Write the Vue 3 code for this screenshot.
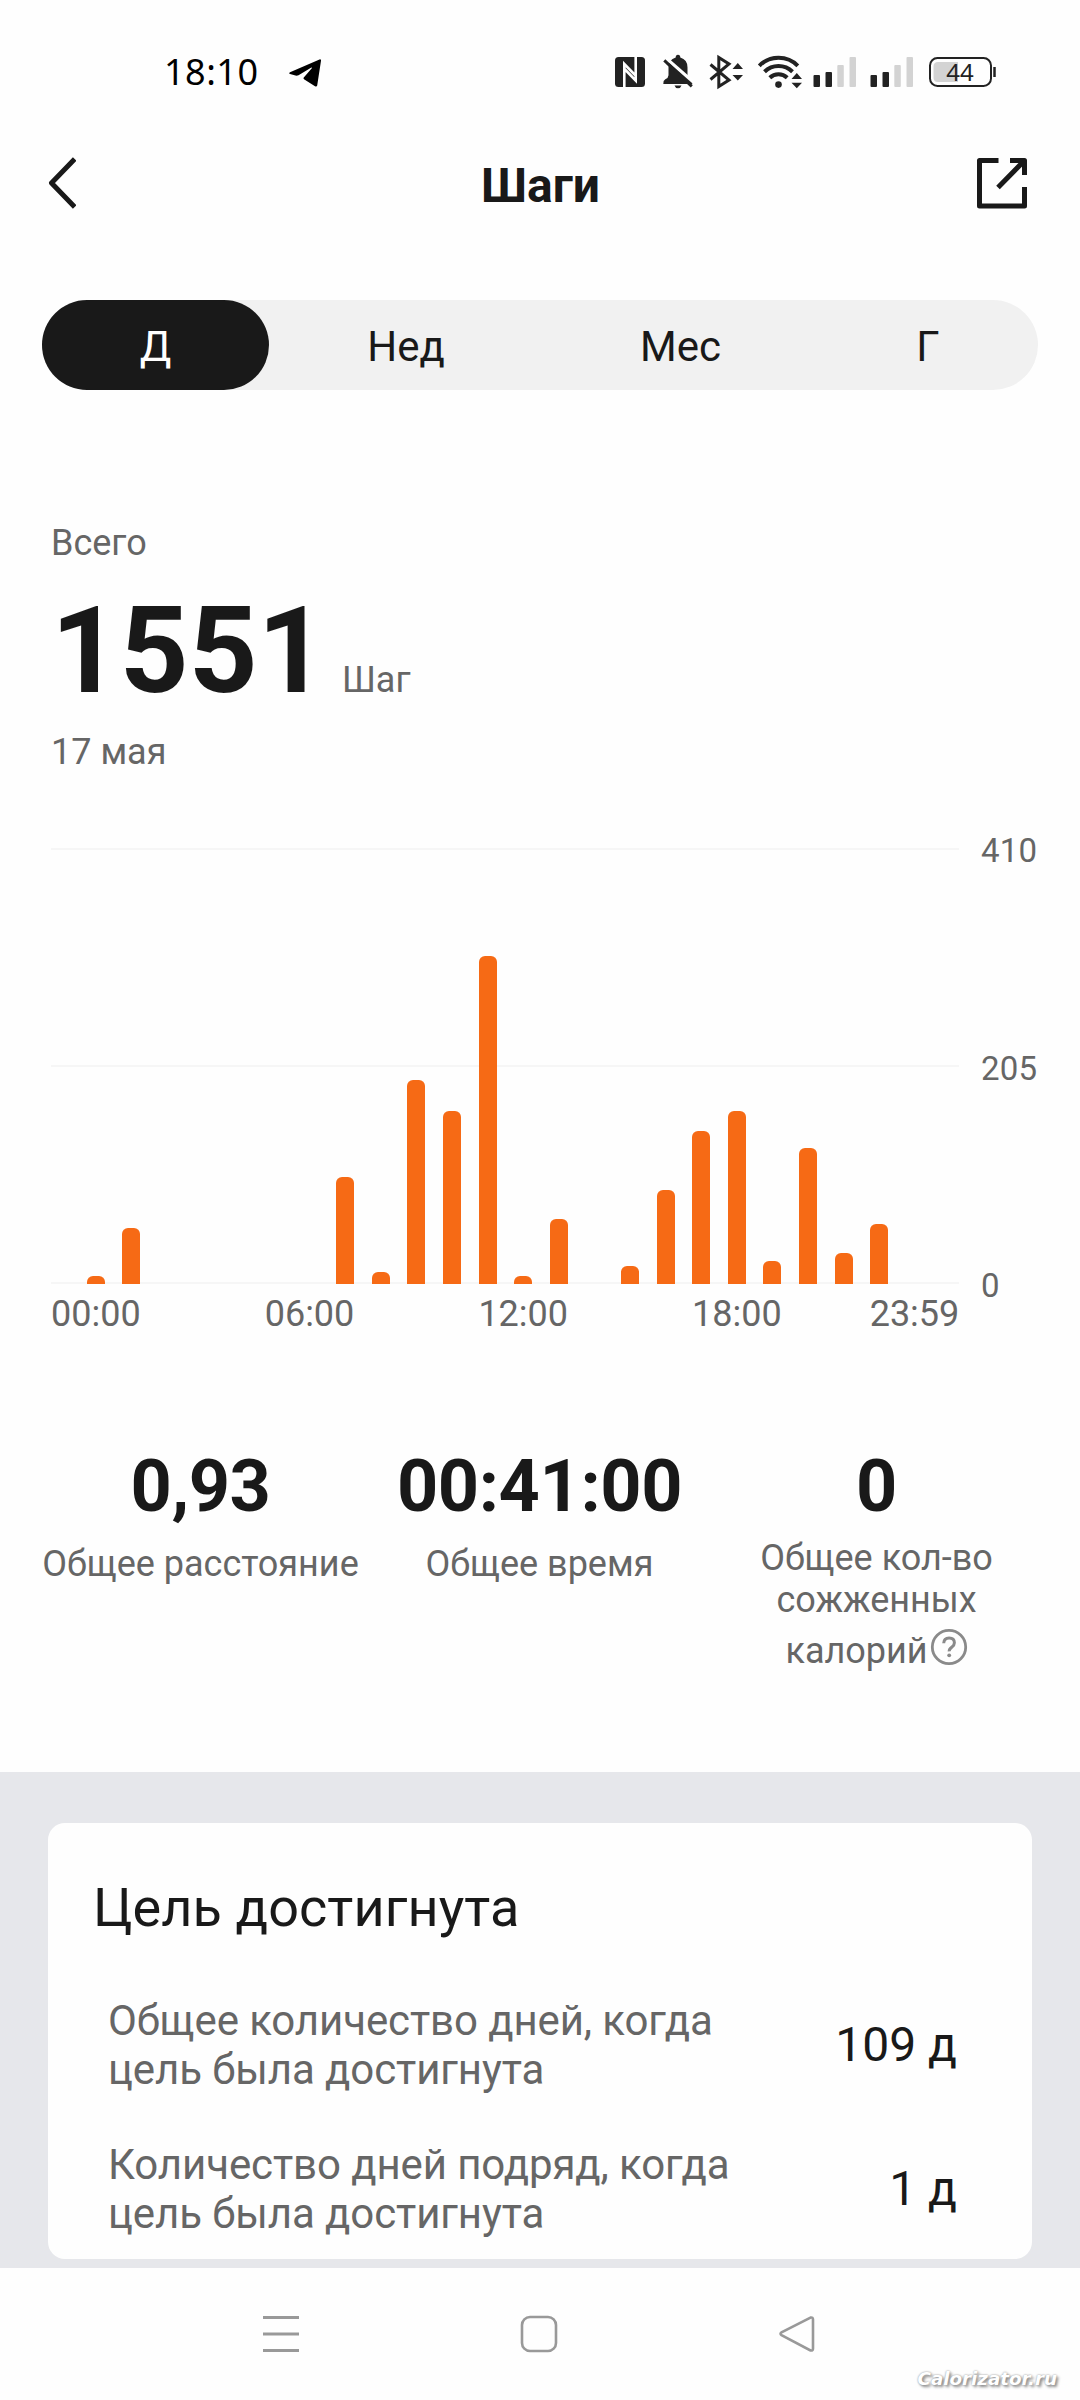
<script setup>
const tabs = [
  { label: 'Д', width: 227, active: true },
  { label: 'Нед', width: 274 },
  { label: 'Мес', width: 275 },
  { label: 'Г', width: 220 },
]

// Bar height in px for every hour, starting at 00:00
const bars = [8, 56, 0, 0, 0, 0, 0, 107, 12, 204, 173, 328, 8, 65, 0, 18, 94, 153, 173, 23, 136, 31, 60]

const hours = ['00:00', '06:00', '12:00', '18:00', '23:59']
const scale = [410, 205, 0]

const goals = [
  { text: ['Общее количество дней, когда', 'цель была достигнута'], value: '109 д' },
  { text: ['Количество дней подряд, когда', 'цель была достигнута'], value: '1 д' },
]
</script>

<template>
  <div class="screen">
    <div class="status">
      <span class="clock">18:10</span>
      <svg class="plane" width="32" height="28" viewBox="0 0 32 28">
        <path d="M1 13.2 30.5.4Q32.2 0 32 1.800L28.200 26.500Q27.700 28.200 26 27.300L15 20.300Q14 19.300 15 18.200L22.800 9.300Q23.300 8.200 22 8.700L9.500 16.300Q8 17 6.500 16.600L1 15Q-.5 14.200 1 13.200Z" fill="#000" />
      </svg>
      <div class="indicators">
        <svg width="46" height="40" viewBox="610 52 46 40">
          <rect x="615" y="57" width="30" height="30" rx="3.500" fill="#222" />
          <path d="M624.300 87V64L635.500 75.500M635.700 57V80.500L624.500 69" fill="none" stroke="#fff" stroke-width="2.600" />
        </svg>
        <svg width="46" height="40" viewBox="656 52 46 40">
          <path d="M678 54.800q2.300 0 2.300 2.700 7.200 2 7.200 10v8.500q0 2.500 3 4.200 2 1.200 2 3.800H663.300q-.3-3.500 2-4.800 3.200-1.500 3.200-4V67.500q0-8 7.200-10 0-2.700 2.300-2.700Z" fill="#222" />
          <path d="M674.500 85.500h7q-.8 2.700-3.500 2.700t-3.500-2.700Z" fill="#222" />
          <path d="M666.500 58.500 695 83.500" stroke="#fff" stroke-width="3" />
          <path d="M664.300 60.300 691.800 86.300" stroke="#222" stroke-width="3" />
        </svg>
        <svg width="50" height="40" viewBox="702 52 50 40">
          <path d="M710.500 64.500 729 80 718.800 86.500V57.500L729 64 710.500 79.500" fill="none" stroke="#222" stroke-width="3" />
          <path d="M732.500 69h10.500l-5.200-6ZM732.500 75h10.500l-5.200 5.500Z" fill="#222" />
        </svg>
        <svg width="56" height="40" viewBox="752 52 56 40">
          <g fill="none" stroke="#222" stroke-width="4">
            <path d="M759.300 65.800a27 27 0 0 1 38.500 0" />
            <path d="M764.500 71.800a20 20 0 0 1 28 0" />
            <path d="M769.800 77.800a12.600 12.600 0 0 1 17.400 0" />
          </g>
          <circle cx="778.500" cy="84.600" r="3.300" fill="#222" />
          <path d="M791.500 79h10.500l-5.200-6ZM791.500 82.800h10.500l-5.200 5.500Z" fill="#222" />
        </svg>
        <svg v-for="n in 2" :key="n" :width="n === 1 ? 54 : 56" height="40" :viewBox="n === 1 ? '808 52 54 40' : '805 52 56 40'">
          <rect x="813.500" y="75" width="6.500" height="12" rx="1" fill="#222" />
          <rect x="825.500" y="72" width="6.500" height="15" rx="1" fill="#222" />
          <rect x="837.300" y="65" width="6.500" height="22" rx="1" fill="#d3d3d3" />
          <rect x="849.500" y="57" width="6.500" height="30" rx="1" fill="#d3d3d3" />
        </svg>
        <svg width="82" height="40" viewBox="918 52 82 40">
          <rect x="930" y="58" width="61" height="28" rx="7.500" fill="none" stroke="#222" stroke-width="2" />
          <path d="M938 62h20v20h-20q-4.500 0-4.500-4.500v-11q0-4.500 4.500-4.500Z" fill="#d3d3d3" />
          <path d="M994.500 67v10" stroke="#222" stroke-width="2.500" />
          <text x="960" y="80.700" text-anchor="middle" class="charge">44</text>
        </svg>
      </div>
    </div>

    <header class="header">
      <svg width="28" height="52" viewBox="0 0 28 52">
        <path d="M26.700 2 3.500 26 26.700 50" fill="none" stroke="#191919" stroke-width="5" stroke-linejoin="round" />
      </svg>
      <h1 class="title">Шаги</h1>
      <svg width="52" height="52" viewBox="0 0 52 52">
        <g fill="none" stroke="#191919" stroke-width="5" stroke-linejoin="round">
          <path d="M22.500 3.500H3.500V49H48.500V30" />
          <path d="M34 3.500H48.500V18M48.500 3.500 22 30.500" />
        </g>
      </svg>
    </header>

    <nav class="tabs">
      <div v-for="t in tabs" :key="t.label" class="tab" :class="{ active: t.active }" :style="{ width: t.width + 'px' }">{{ t.label }}</div>
    </nav>

    <section class="summary">
      <div class="muted">Всего</div>
      <div class="total"><strong>1551</strong><span class="muted">Шаг</span></div>
      <div class="muted">17 мая</div>
    </section>

    <section class="chart">
      <div class="grid"><i /><i /><i /></div>
      <div class="bars">
        <div v-for="(h, i) in bars" :key="i" class="slot"><div class="bar" :style="{ height: h + 'px' }" /></div>
      </div>
      <div class="scale"><span v-for="s in scale" :key="s">{{ s }}</span></div>
      <div class="hours"><span v-for="h in hours" :key="h" class="hour">{{ h }}</span></div>
    </section>

    <section class="stats">
      <div class="stat">
        <strong>0,93</strong>
        <div class="caption">Общее расстояние</div>
      </div>
      <div class="stat">
        <strong>00:41:00</strong>
        <div class="caption">Общее время</div>
      </div>
      <div class="stat last">
        <strong>0</strong>
        <div class="caption tall">
          <div>Общее кол-во</div>
          <div>сожженных</div>
          <div class="help">
            <span>калорий</span>
            <svg width="38" height="38" viewBox="0 0 38 38">
              <circle cx="19" cy="19" r="16.700" fill="none" stroke="#8a8a8a" stroke-width="2.800" />
              <path d="M13.700 15.300q.2-5.300 5.400-5.300t5.300 4.800q0 2.500-2.700 4.500t-2.500 4" fill="none" stroke="#8a8a8a" stroke-width="3" />
              <circle cx="19.200" cy="27.300" r="1.900" fill="#8a8a8a" />
            </svg>
          </div>
        </div>
      </div>
    </section>

    <section class="goals">
      <div class="card">
        <h2>Цель достигнута</h2>
        <div v-for="g in goals" :key="g.value" class="goal">
          <div class="goal-text"><div v-for="line in g.text" :key="line">{{ line }}</div></div>
          <div class="goal-value">{{ g.value }}</div>
        </div>
      </div>
    </section>

    <footer class="system">
      <svg width="38" height="38" viewBox="0 0 38 38"><path d="M1 2.500H37M1 19H37M1 35.500H37" stroke="#999" stroke-width="3" /></svg>
      <svg width="38" height="38" viewBox="0 0 38 38"><rect x="2" y="2" width="34" height="34" rx="8" fill="none" stroke="#999" stroke-width="2.600" /></svg>
      <svg width="38" height="38" viewBox="0 0 38 38"><path d="M32.500 2.600 3.500 17.300q-2 1.400 0 2.800L32.500 35.400q2.500.6 2.500-2V4.600q0-2.600-2.500-2Z" fill="none" stroke="#999" stroke-width="2.600" /></svg>
      <span class="watermark">Calorizator.ru</span>
    </footer>
  </div>
</template>

<style>
body { background: #fefefe; }
</style>

<style scoped>
.screen {
  display: flex;
  flex-direction: column;
  width: 1080px;
  height: 2400px;
  overflow: hidden;
  background: #fefefe;
  color: #191919;
  font-family: Roboto, "Noto Sans", sans-serif;
}
.screen > * { flex-shrink: 0; }
svg { display: block; flex: none; }
.status { display: flex; align-items: center; height: 144px; padding: 0 80px 0 164px; }
.clock { width: 125px; font: 36px/44px "Noto Sans", sans-serif; letter-spacing: .500px; color: #000; }
.plane { margin-top: 2px; }
.indicators { display: flex; margin-left: auto; }
.charge { font: 24px "Noto Sans", sans-serif; fill: #222; }
.header { display: flex; align-items: center; justify-content: space-between; height: 78px; padding: 0 52px 0 48px; }
.title { margin: 6px 0 0 29px; font-size: 48px; line-height: 56px; font-weight: 700; }
.tabs { display: flex; height: 90px; margin: 78px 42px 0; border-radius: 45px; background: #f1f1f1; }
.tab { border-radius: 45px; font-size: 42px; line-height: 94px; height: 90px; text-align: center; }
.tab.active { background: #191919; color: #fff; }
.muted { font-size: 36px; line-height: 42px; color: #666; }
.summary { margin: 132px 0 0 51px; }
.total { display: flex; align-items: baseline; height: 140px; margin: 17px 0 10px; }
.total strong { width: 291px; font-size: 120px; line-height: 140px; }
.chart {
  display: grid;
  grid-template-columns: 908px 1fr;
  grid-template-rows: 436px 50px;
  margin: 75px 0 0 51px;
}
.grid, .bars { grid-area: 1 / 1; }
.grid { display: flex; flex-direction: column; justify-content: space-between; }
.grid i { height: 2px; background: #f6f6f6; }
.bars { display: flex; align-items: flex-end; padding-left: 27px; z-index: 1; }
.slot { display: flex; justify-content: center; width: 35.620px; }
.bar { width: 18px; border-radius: 6px 6px 0 0; background: #f66a15; }
.scale {
  display: flex;
  flex-direction: column;
  justify-content: space-between;
  margin: -17px 0 -21px 22px;
  font-size: 33px;
  line-height: 39px;
  letter-spacing: .200px;
  color: #666;
}
.hours { display: flex; padding-top: 9px; font-size: 36px; line-height: 42px; color: #666; }
.hour { flex: none; width: 213.700px; }
.hour:nth-child(4) { width: 177.600px; }
.hour:nth-child(5) { width: auto; }
.stats { display: flex; height: 438px; padding: 111px 32px 0 31px; box-sizing: border-box; }
.stat { flex: 1; text-align: center; }
.stat.last { padding-right: 2px; margin-left: -2px; }
.stat strong { display: block; font-size: 72px; line-height: 84px; letter-spacing: -.400px; }
.caption { margin-top: 14px; font-size: 36px; line-height: 42px; color: #666; white-space: nowrap; }
.caption.tall { margin-top: 8px; }
.help { display: flex; justify-content: center; padding-top: 7px; }
.help span { padding-top: 2px; }
.help svg { margin-left: 2px; }
.goals { height: 496px; padding: 51px 48px 0; box-sizing: border-box; background: #e6e7eb; }
.card { height: 436px; padding: 53px 75px 0 43px; box-sizing: border-box; border-radius: 17px; background: #fefefe; }
.card h2 { margin: 0 0 56px 2px; font-size: 54px; line-height: 64px; letter-spacing: .080px; font-weight: 400; }
.goal { display: flex; align-items: center; justify-content: space-between; margin-bottom: 46px; padding-left: 17px; }
.goal-text { font-size: 42px; line-height: 49px; letter-spacing: -.100px; color: #666; }
.goal-value { font-size: 48px; line-height: 56px; }
.system { position: relative; display: flex; gap: 220px; padding: 47px 0 0 262px; }
.watermark {
  position: absolute;
  right: 23px;
  bottom: -38px;
  font: italic 700 18.300px/24px "DejaVu Sans", sans-serif;
  color: #fff;
  text-shadow: 0 0 2px #888, 2px 2px 3px #888;
}
</style>
